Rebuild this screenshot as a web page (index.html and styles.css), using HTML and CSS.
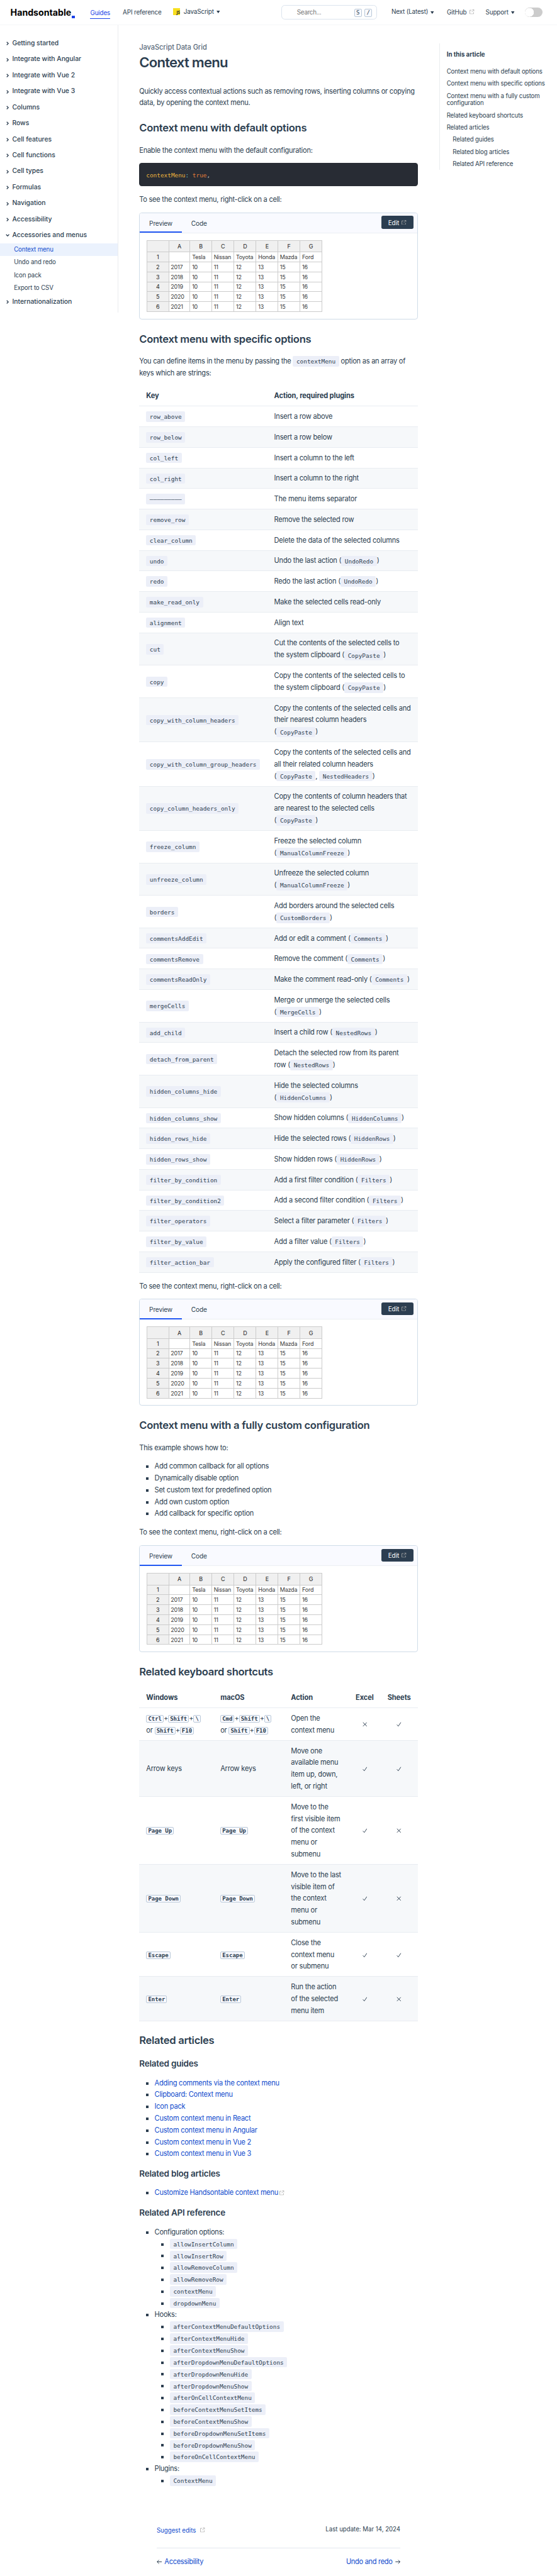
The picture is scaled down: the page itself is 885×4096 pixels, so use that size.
FILE: index.html
```html
<!DOCTYPE html>
<html lang="en">
<head>
<meta charset="utf-8">
<title>Context menu</title>
<link rel="stylesheet" href="styles.css">
</head>
<body>
<svg class="defs" width="0" height="0" aria-hidden="true">
  <symbol id="ext" viewBox="0 0 11 11"><path d="M4.6 1.7H.7v8.6h8.6V6.4M6.6.7h3.7v3.7M10.1.9 5 6" fill="none" stroke="currentColor" stroke-width="1.2"/></symbol>
  <symbol id="chev" viewBox="0 0 6 9"><path d="M1 1l3.6 3.5L1 8" fill="none" stroke="currentColor" stroke-width="1.9"/></symbol>
  <symbol id="yes" viewBox="0 0 12 12"><path d="M1 6.8l3.4 3.9L11 1" fill="none" stroke="currentColor" stroke-width="1.5"/></symbol>
  <symbol id="no" viewBox="0 0 12 12"><path d="M1.2 1.2l9.6 9.6M10.8 1.2l-9.6 9.6" fill="none" stroke="currentColor" stroke-width="1.5"/></symbol>
  <symbol id="tri" viewBox="0 0 8 6"><path d="M0 0h8L4 6z" fill="currentColor"/></symbol>
  <symbol id="left" viewBox="0 0 12 10"><path d="M12 5H1M5.2.8 1 5l4.2 4.2" fill="none" stroke="currentColor" stroke-width="1.4"/></symbol>
</svg>
<div class="page">
  <header class="top">
    <div class="logo">Handsontable<i></i></div>
    <nav class="links">
      <a class="on">Guides</a>
      <a>API reference</a>
      <a class="fw"><span class="js">JS</span>JavaScript<svg class="tri"><use href="#tri"/></svg></a>
    </nav>
    <div class="search"><span>Search...</span><kbd>S</kbd><kbd>/</kbd></div>
    <nav class="right">
      <a class="ver">Next (Latest)<svg class="tri"><use href="#tri"/></svg></a>
      <a class="gh">GitHub<svg class="ext"><use href="#ext"/></svg></a>
      <a class="sup">Support<svg class="tri"><use href="#tri"/></svg></a>
      <span class="toggle"></span>
    </nav>
  </header>
  <div class="cols">
    <aside class="side">
      <div class="g"><svg><use href="#chev"/></svg>Getting started</div>
      <div class="g"><svg><use href="#chev"/></svg>Integrate with Angular</div>
      <div class="g"><svg><use href="#chev"/></svg>Integrate with Vue 2</div>
      <div class="g"><svg><use href="#chev"/></svg>Integrate with Vue 3</div>
      <div class="g"><svg><use href="#chev"/></svg>Columns</div>
      <div class="g"><svg><use href="#chev"/></svg>Rows</div>
      <div class="g"><svg><use href="#chev"/></svg>Cell features</div>
      <div class="g"><svg><use href="#chev"/></svg>Cell functions</div>
      <div class="g"><svg><use href="#chev"/></svg>Cell types</div>
      <div class="g"><svg><use href="#chev"/></svg>Formulas</div>
      <div class="g"><svg><use href="#chev"/></svg>Navigation</div>
      <div class="g"><svg><use href="#chev"/></svg>Accessibility</div>
      <div class="g open"><svg><use href="#chev"/></svg>Accessories and menus</div>
      <div class="s on">Context menu</div>
      <div class="s">Undo and redo</div>
      <div class="s">Icon pack</div>
      <div class="s">Export to CSV</div>
      <div class="g last"><svg><use href="#chev"/></svg>Internationalization</div>
    </aside>
    <main>
      <div class="crumb">JavaScript Data Grid</div>
      <h1>Context menu</h1>
      <p class="lead">Quickly access contextual actions such as removing rows, inserting columns or copying<br>data, by opening the context menu.</p>
      <h2 class="h-default">Context menu with default options</h2>
      <p>Enable the context menu with the default configuration:</p>
      <pre><span class="k">contextMenu</span><span class="o">:</span> <span class="b">true</span>,</pre>
      <p>To see the context menu, right-click on a cell:</p>
      <section class="demo">
        <div class="tabs"><span class="on">Preview</span><span>Code</span><button>Edit<svg class="ext"><use href="#ext"/></svg></button></div>
        <table class="grid"><colgroup><col class="w50"><col class="w49"><col class="w50"><col class="w51"><col class="w51"><col class="w50"><col class="w51"><col class="w50"></colgroup>
          <tr><th></th><th>A</th><th>B</th><th>C</th><th>D</th><th>E</th><th>F</th><th>G</th></tr>
          <tr><th>1</th><td></td><td>Tesla</td><td>Nissan</td><td>Toyota</td><td>Honda</td><td>Mazda</td><td>Ford</td></tr>
          <tr><th>2</th><td>2017</td><td>10</td><td>11</td><td>12</td><td>13</td><td>15</td><td>16</td></tr>
          <tr><th>3</th><td>2018</td><td>10</td><td>11</td><td>12</td><td>13</td><td>15</td><td>16</td></tr>
          <tr><th>4</th><td>2019</td><td>10</td><td>11</td><td>12</td><td>13</td><td>15</td><td>16</td></tr>
          <tr><th>5</th><td>2020</td><td>10</td><td>11</td><td>12</td><td>13</td><td>15</td><td>16</td></tr>
          <tr><th>6</th><td>2021</td><td>10</td><td>11</td><td>12</td><td>13</td><td>15</td><td>16</td></tr>
        </table>
      </section>
      <h2>Context menu with specific options</h2>
      <p class="two">You can define items in the menu by passing the <code>contextMenu</code> option as an array of<br>keys which are strings:</p>
      <table class="doc keys"><colgroup><col class="c-key"><col></colgroup>
        <tr><th>Key</th><th>Action, required plugins</th></tr>
        <tr><td><code>row_above</code></td><td>Insert a row above</td></tr>
        <tr><td><code>row_below</code></td><td>Insert a row below</td></tr>
        <tr><td><code>col_left</code></td><td>Insert a column to the left</td></tr>
        <tr><td><code>col_right</code></td><td>Insert a column to the right</td></tr>
        <tr><td><code>–––––––––</code></td><td>The menu items separator</td></tr>
        <tr><td><code>remove_row</code></td><td>Remove the selected row</td></tr>
        <tr><td><code>clear_column</code></td><td>Delete the data of the selected columns</td></tr>
        <tr><td><code>undo</code></td><td>Undo the last action (<code>UndoRedo</code>)</td></tr>
        <tr><td><code>redo</code></td><td>Redo the last action (<code>UndoRedo</code>)</td></tr>
        <tr><td><code>make_read_only</code></td><td>Make the selected cells read-only</td></tr>
        <tr><td><code>alignment</code></td><td>Align text</td></tr>
        <tr><td><code>cut</code></td><td>Cut the contents of the selected cells to<br>the system clipboard (<code>CopyPaste</code>)</td></tr>
        <tr><td><code>copy</code></td><td>Copy the contents of the selected cells to<br>the system clipboard (<code>CopyPaste</code>)</td></tr>
        <tr><td><code>copy_with_column_headers</code></td><td>Copy the contents of the selected cells and<br>their nearest column headers<br>(<code>CopyPaste</code>)</td></tr>
        <tr><td><code>copy_with_column_group_headers</code></td><td>Copy the contents of the selected cells and<br>all their related column headers<br>(<code>CopyPaste</code>, <code>NestedHeaders</code>)</td></tr>
        <tr><td><code>copy_column_headers_only</code></td><td>Copy the contents of column headers that<br>are nearest to the selected cells<br>(<code>CopyPaste</code>)</td></tr>
        <tr><td><code>freeze_column</code></td><td>Freeze the selected column<br>(<code>ManualColumnFreeze</code>)</td></tr>
        <tr><td><code>unfreeze_column</code></td><td>Unfreeze the selected column<br>(<code>ManualColumnFreeze</code>)</td></tr>
        <tr><td><code>borders</code></td><td>Add borders around the selected cells<br>(<code>CustomBorders</code>)</td></tr>
        <tr><td><code>commentsAddEdit</code></td><td>Add or edit a comment (<code>Comments</code>)</td></tr>
        <tr><td><code>commentsRemove</code></td><td>Remove the comment (<code>Comments</code>)</td></tr>
        <tr><td><code>commentsReadOnly</code></td><td>Make the comment read-only (<code>Comments</code>)</td></tr>
        <tr><td><code>mergeCells</code></td><td>Merge or unmerge the selected cells<br>(<code>MergeCells</code>)</td></tr>
        <tr><td><code>add_child</code></td><td>Insert a child row (<code>NestedRows</code>)</td></tr>
        <tr><td><code>detach_from_parent</code></td><td>Detach the selected row from its parent<br>row (<code>NestedRows</code>)</td></tr>
        <tr><td><code>hidden_columns_hide</code></td><td>Hide the selected columns<br>(<code>HiddenColumns</code>)</td></tr>
        <tr><td><code>hidden_columns_show</code></td><td>Show hidden columns (<code>HiddenColumns</code>)</td></tr>
        <tr><td><code>hidden_rows_hide</code></td><td>Hide the selected rows (<code>HiddenRows</code>)</td></tr>
        <tr><td><code>hidden_rows_show</code></td><td>Show hidden rows (<code>HiddenRows</code>)</td></tr>
        <tr><td><code>filter_by_condition</code></td><td>Add a first filter condition (<code>Filters</code>)</td></tr>
        <tr><td><code>filter_by_condition2</code></td><td>Add a second filter condition (<code>Filters</code>)</td></tr>
        <tr><td><code>filter_operators</code></td><td>Select a filter parameter (<code>Filters</code>)</td></tr>
        <tr><td><code>filter_by_value</code></td><td>Add a filter value (<code>Filters</code>)</td></tr>
        <tr><td><code>filter_action_bar</code></td><td>Apply the configured filter (<code>Filters</code>)</td></tr>
      </table>
      <p class="see">To see the context menu, right-click on a cell:</p>
      <section class="demo">
        <div class="tabs"><span class="on">Preview</span><span>Code</span><button>Edit<svg class="ext"><use href="#ext"/></svg></button></div>
        <table class="grid"><colgroup><col class="w50"><col class="w49"><col class="w50"><col class="w51"><col class="w51"><col class="w50"><col class="w51"><col class="w50"></colgroup>
          <tr><th></th><th>A</th><th>B</th><th>C</th><th>D</th><th>E</th><th>F</th><th>G</th></tr>
          <tr><th>1</th><td></td><td>Tesla</td><td>Nissan</td><td>Toyota</td><td>Honda</td><td>Mazda</td><td>Ford</td></tr>
          <tr><th>2</th><td>2017</td><td>10</td><td>11</td><td>12</td><td>13</td><td>15</td><td>16</td></tr>
          <tr><th>3</th><td>2018</td><td>10</td><td>11</td><td>12</td><td>13</td><td>15</td><td>16</td></tr>
          <tr><th>4</th><td>2019</td><td>10</td><td>11</td><td>12</td><td>13</td><td>15</td><td>16</td></tr>
          <tr><th>5</th><td>2020</td><td>10</td><td>11</td><td>12</td><td>13</td><td>15</td><td>16</td></tr>
          <tr><th>6</th><td>2021</td><td>10</td><td>11</td><td>12</td><td>13</td><td>15</td><td>16</td></tr>
        </table>
      </section>
      <h2>Context menu with a fully custom configuration</h2>
      <p class="example">This example shows how to:</p>
      <ul class="howto">
        <li>Add common callback for all options</li>
        <li>Dynamically disable option</li>
        <li>Set custom text for predefined option</li>
        <li>Add own custom option</li>
        <li>Add callback for specific option</li>
      </ul>
      <p>To see the context menu, right-click on a cell:</p>
      <section class="demo third">
        <div class="tabs"><span class="on">Preview</span><span>Code</span><button>Edit<svg class="ext"><use href="#ext"/></svg></button></div>
        <table class="grid"><colgroup><col class="w50"><col class="w49"><col class="w50"><col class="w51"><col class="w51"><col class="w50"><col class="w51"><col class="w50"></colgroup>
          <tr><th></th><th>A</th><th>B</th><th>C</th><th>D</th><th>E</th><th>F</th><th>G</th></tr>
          <tr><th>1</th><td></td><td>Tesla</td><td>Nissan</td><td>Toyota</td><td>Honda</td><td>Mazda</td><td>Ford</td></tr>
          <tr><th>2</th><td>2017</td><td>10</td><td>11</td><td>12</td><td>13</td><td>15</td><td>16</td></tr>
          <tr><th>3</th><td>2018</td><td>10</td><td>11</td><td>12</td><td>13</td><td>15</td><td>16</td></tr>
          <tr><th>4</th><td>2019</td><td>10</td><td>11</td><td>12</td><td>13</td><td>15</td><td>16</td></tr>
          <tr><th>5</th><td>2020</td><td>10</td><td>11</td><td>12</td><td>13</td><td>15</td><td>16</td></tr>
          <tr><th>6</th><td>2021</td><td>10</td><td>11</td><td>12</td><td>13</td><td>15</td><td>16</td></tr>
        </table>
      </section>
      <h2 class="h-keys">Related keyboard shortcuts</h2>
      <table class="doc short"><colgroup><col class="c1"><col class="c2"><col class="c3"><col class="c4"><col class="c5"></colgroup>
        <tr><th>Windows</th><th>macOS</th><th>Action</th><th>Excel</th><th>Sheets</th></tr>
        <tr><td><kbd>Ctrl</kbd>+<kbd>Shift</kbd>+<kbd>\</kbd><br>or <kbd>Shift</kbd>+<kbd>F10</kbd></td><td><kbd>Cmd</kbd>+<kbd>Shift</kbd>+<kbd>\</kbd><br>or <kbd>Shift</kbd>+<kbd>F10</kbd></td><td>Open the<br>context menu</td><td><svg><use href="#no"/></svg></td><td><svg><use href="#yes"/></svg></td></tr>
        <tr><td>Arrow keys</td><td>Arrow keys</td><td>Move one<br>available menu<br>item up, down,<br>left, or right</td><td><svg><use href="#yes"/></svg></td><td><svg><use href="#yes"/></svg></td></tr>
        <tr><td><kbd>Page Up</kbd></td><td><kbd>Page Up</kbd></td><td>Move to the<br>first visible item<br>of the context<br>menu or<br>submenu</td><td><svg><use href="#yes"/></svg></td><td><svg><use href="#no"/></svg></td></tr>
        <tr><td><kbd>Page Down</kbd></td><td><kbd>Page Down</kbd></td><td>Move to the last<br>visible item of<br>the context<br>menu or<br>submenu</td><td><svg><use href="#yes"/></svg></td><td><svg><use href="#no"/></svg></td></tr>
        <tr><td><kbd>Escape</kbd></td><td><kbd>Escape</kbd></td><td>Close the<br>context menu<br>or submenu</td><td><svg><use href="#yes"/></svg></td><td><svg><use href="#yes"/></svg></td></tr>
        <tr><td><kbd>Enter</kbd></td><td><kbd>Enter</kbd></td><td>Run the action<br>of the selected<br>menu item</td><td><svg><use href="#yes"/></svg></td><td><svg><use href="#no"/></svg></td></tr>
      </table>
      <h2 class="h-articles">Related articles</h2>
      <h3>Related guides</h3>
      <ul>
        <li><a>Adding comments via the context menu</a></li>
        <li><a>Clipboard: Context menu</a></li>
        <li><a>Icon pack</a></li>
        <li><a>Custom context menu in React</a></li>
        <li><a>Custom context menu in Angular</a></li>
        <li><a>Custom context menu in Vue 2</a></li>
        <li><a>Custom context menu in Vue 3</a></li>
      </ul>
      <h3>Related blog articles</h3>
      <ul>
        <li><a>Customize Handsontable context menu</a><svg class="ext"><use href="#ext"/></svg></li>
      </ul>
      <h3>Related API reference</h3>
      <ul class="api">
        <li>Configuration options:
          <ul>
            <li><code>allowInsertColumn</code></li>
            <li><code>allowInsertRow</code></li>
            <li><code>allowRemoveColumn</code></li>
            <li><code>allowRemoveRow</code></li>
            <li><code>contextMenu</code></li>
            <li><code>dropdownMenu</code></li>
          </ul>
        </li>
        <li>Hooks:
          <ul>
            <li><code>afterContextMenuDefaultOptions</code></li>
            <li><code>afterContextMenuHide</code></li>
            <li><code>afterContextMenuShow</code></li>
            <li><code>afterDropdownMenuDefaultOptions</code></li>
            <li><code>afterDropdownMenuHide</code></li>
            <li><code>afterDropdownMenuShow</code></li>
            <li><code>afterOnCellContextMenu</code></li>
            <li><code>beforeContextMenuSetItems</code></li>
            <li><code>beforeContextMenuShow</code></li>
            <li><code>beforeDropdownMenuSetItems</code></li>
            <li><code>beforeDropdownMenuShow</code></li>
            <li><code>beforeOnCellContextMenu</code></li>
          </ul>
        </li>
        <li>Plugins:
          <ul>
            <li><code>ContextMenu</code></li>
          </ul>
        </li>
      </ul>
      <footer>
        <div class="meta"><a>Suggest edits<svg class="ext"><use href="#ext"/></svg></a><span>Last update: Mar 14, 2024</span></div>
        <div class="pager"><span><svg><use href="#left"/></svg><a>Accessibility</a></span><span><a>Undo and redo</a><svg class="flip"><use href="#left"/></svg></span></div>
      </footer>
    </main>
    <aside class="toc">
      <b>In this article</b>
      <a>Context menu with default options</a>
      <a>Context menu with specific options</a>
      <a>Context menu with a fully custom<br>configuration</a>
      <a>Related keyboard shortcuts</a>
      <a>Related articles</a>
      <a class="sub">Related guides</a>
      <a class="sub">Related blog articles</a>
      <a class="sub">Related API reference</a>
    </aside>
  </div>
</div>
</body>
</html>
```

FILE: styles.css
```css
* { box-sizing: border-box; }
body { margin: 0; background: #fff; }
.defs { display: block; height: 0; }
.page {
  width: 1280px; height: 5922px; zoom: 0.69141; overflow: hidden;
  font: 16px/27.2px Inter, "Liberation Sans", sans-serif; letter-spacing: -0.36px;
  color: #2c3e50; white-space: nowrap;
}
svg { flex: none; }
.ext { width: 11px; height: 11px; color: #aaa; }
.tri { width: 8px; height: 6px; }

/* header */
.top { display: flex; align-items: center; height: 58px; border-bottom: 2px solid #f5f6f8; font-size: 14.3px; line-height: 20px; letter-spacing: -0.22px; }
.logo { display: flex; width: 184px; padding-left: 24px; font-size: 20.5px; font-weight: 700; color: #000; letter-spacing: 0; }
.logo i { width: 7px; height: 6px; margin: 18px 0 -4px 1px; background: #1a42e8; }
.links { display: flex; width: 438px; height: 56px; align-items: center; }
.links a { margin-right: 28.8px; }
.links .on { margin-left: 23.5px; color: #1a42e8; padding: 6px 0 1.5px; border-bottom: 2px solid #1a42e8; }
.links .fw { display: flex; align-items: center; margin: 0 0 2px -2px; }
.js { width: 16px; height: 16px; margin-right: 8px; padding: 4px 0.5px 0 0; background: #f7df1e; color: #222; font: 700 9.5px/12px "Open Sans", sans-serif; text-align: right; }
.fw .tri, .ver .tri, .sup .tri { margin-left: 6px; }
.search { display: flex; align-items: center; width: 221px; height: 34px; margin-left: 24px; padding: 0 10.6px 0 35px; border: 1px solid #dbe4ee; border-radius: 8px; color: #757575; letter-spacing: -0.45px; }
.search span { flex: 1; }
kbd { border: 1px solid #b9c8d8; border-bottom-width: 2px; border-radius: 3px; background: #f9faff; font: 700 13px/14px "DejaVu Sans Mono", monospace; letter-spacing: 0; color: #2c3e50; padding: 0 3px; }
.search kbd { width: 17px; height: 19px; margin-left: 7px; font-weight: 400; line-height: 17px; text-align: center; padding: 0; margin-top: 2px; }
.right { display: flex; align-items: center; height: 56px; padding-left: 32.5px; }
.ver { margin-bottom: 2px; width: 127.5px; }
.gh { width: 89px; }
.gh .ext { margin-left: 6.8px; }
.sup { width: 90.5px; }
.sup .tri { margin-left: 6.7px; }
.toggle { width: 40px; height: 22px; border-radius: 11px; background: radial-gradient(circle at 10.5px 11px, #fff 9.8px, #ccc 10.4px); }

/* columns */
.cols { display: flex; }
.side { width: 272px; height: 661.5px; padding-top: 24px; border-right: 1px solid #eaecef; flex: none; letter-spacing: 0; }
.g { display: flex; align-items: center; height: 36.78px; padding-left: 14px; font-size: 15px; font-weight: 500; }
.g svg { width: 6px; height: 9px; margin-right: 8.2px; }
.g.open svg { transform: rotate(90deg); }
.s { height: 29.2px; line-height: 29.2px; padding-left: 32px; font-size: 14px; letter-spacing: -0.14px; }
.s.on { color: #104bcd; background: #ebf2fd; }
.last { margin-top: -1px; }
main { width: 640px; margin-left: 48px; flex: none; }
.toc { display: flex; flex-direction: column; gap: 11px; width: 240px; height: 291px; margin: 42px 0 0 49px; padding: 17.5px 0 0 16px; border-left: 1px solid #eaecef; font-size: 14px; line-height: 17px; letter-spacing: -0.2px; }
.toc b { margin-bottom: 10.5px; font-weight: 700; letter-spacing: 0; }
.toc .sub { padding-left: 14px; }

/* article */
.crumb { margin-top: 38px; font-size: 16px; font-weight: 500; color: #5b6b7b; letter-spacing: -0.1px; }
h1 { margin: 0.8px 0 0; font-size: 32px; line-height: 40px; font-weight: 600; letter-spacing: -1.13px; }
h2 { margin: 28.8px 0 0; font-size: 24px; line-height: 34px; font-weight: 600; letter-spacing: -0.42px; }
h3 { margin: 17.2px 0 0; font-size: 19.5px; line-height: 30px; font-weight: 600; letter-spacing: -0.28px; }
p { margin: 0; }
.lead { margin-top: 32px; }
.h-default { margin-top: 27.6px; }
.h-articles { margin-top: 28.3px; }
.h-articles + h3 { margin-top: 21.2px; }
h2 + p { margin-top: 20px; }
a { color: inherit; }
main a { color: #104bcd; }
code, pre { font: 13.6px/1 "DejaVu Sans Mono", monospace; letter-spacing: 0; }
code { padding: 4px 8px; border-radius: 3px; background: #eceff8; }
pre { height: 54.8px; margin: 14.8px 0 17.2px; padding: 19px 16px; border-radius: 6px; background: #282c34; color: #ccc; line-height: 19px; }
.k { color: #e9b23d; } .o { color: #67cdcc; } .b { color: #e07b39; }
.demo { height: 246px; margin-top: 15.2px; border: 1px solid #cfdce8; border-radius: 6px; overflow: hidden; }
.third { height: 245.4px; margin-top: 16px; }
.tabs { display: flex; height: 46.5px; background: #f9faff; border-bottom: 1px solid #eceff3; font-size: 14.6px; line-height: 48px; letter-spacing: -0.22px; }
.tabs span { padding: 0 21.5px; height: 46px; }
.tabs .on { width: 96.5px; border-bottom: 3px solid #2257f2; }
button { display: flex; align-items: center; justify-content: center; gap: 6px; width: 73px; height: 30px; margin: 6.5px 9px 0 auto; border: 0; border-radius: 4px; background: #2c3e50; color: #fff; font: 14.5px Inter, sans-serif; letter-spacing: -0.1px; }
.grid { margin: 16px 0 0 15.5px; width: 403px; table-layout: fixed; border-collapse: collapse; font-size: 13px; line-height: 16px; color: #373737; letter-spacing: -0.3px; }
.grid td, .grid th { height: 22.87px; padding: 0 0 0 4px; border: 1px solid #ccc; font-weight: 400; }
.grid th { padding: 0; background: #f0f0f0; color: #222; text-align: center; }
.grid tr:first-child th { height: 26.5px; }
.w49 { width: 49px; } .w50 { width: 50px; } .w51 { width: 51px; }
.doc { width: 640px; table-layout: fixed; border-collapse: collapse; letter-spacing: -0.31px; }
.doc th, .doc td { padding: 9.9px 0 8.85px 16px; border-bottom: 1px solid #e8ecf1; text-align: left; }
.doc th { font-weight: 700; letter-spacing: -0.1px; }
.doc tr:nth-child(odd) td { background: #f6f8fa; }
.keys { margin-top: 15.7px; }
.c-key { width: 294px; }
.see { margin-top: 17.7px; }
ul { margin: 15.1px 0 0; padding-left: 35.2px; list-style: square; }
ul ul { margin: 0; }
.howto { margin: 15.6px 0 16px; }
.api { margin-top: 15.8px; }
.short { margin-top: 19px; }
.c1 { width: 170.4px; } .c2 { width: 162.2px; } .c3 { width: 148.8px; } .c4 { width: 73px; }
.short th:nth-child(n+4), .short td:nth-child(n+4) { padding-left: 0; text-align: center; }
.short svg { width: 11px; height: 11px; vertical-align: -1px; }
li .ext { margin-left: 3px; vertical-align: -1px; }

footer { margin: 86.5px 40px 0; }
.meta { display: flex; justify-content: space-between; height: 56.3px; border-bottom: 1px solid #e3e6ee; font-size: 14px; letter-spacing: 0; }
.meta a { padding-top: 1.9px; }
.meta .ext { margin-left: 10px; }
.pager { display: flex; justify-content: space-between; margin-top: 17px; letter-spacing: -0.44px; }
.pager span { display: flex; align-items: center; gap: 6px; }
.pager svg { width: 12px; height: 10px; }
.flip { transform: scaleX(-1); }
```
